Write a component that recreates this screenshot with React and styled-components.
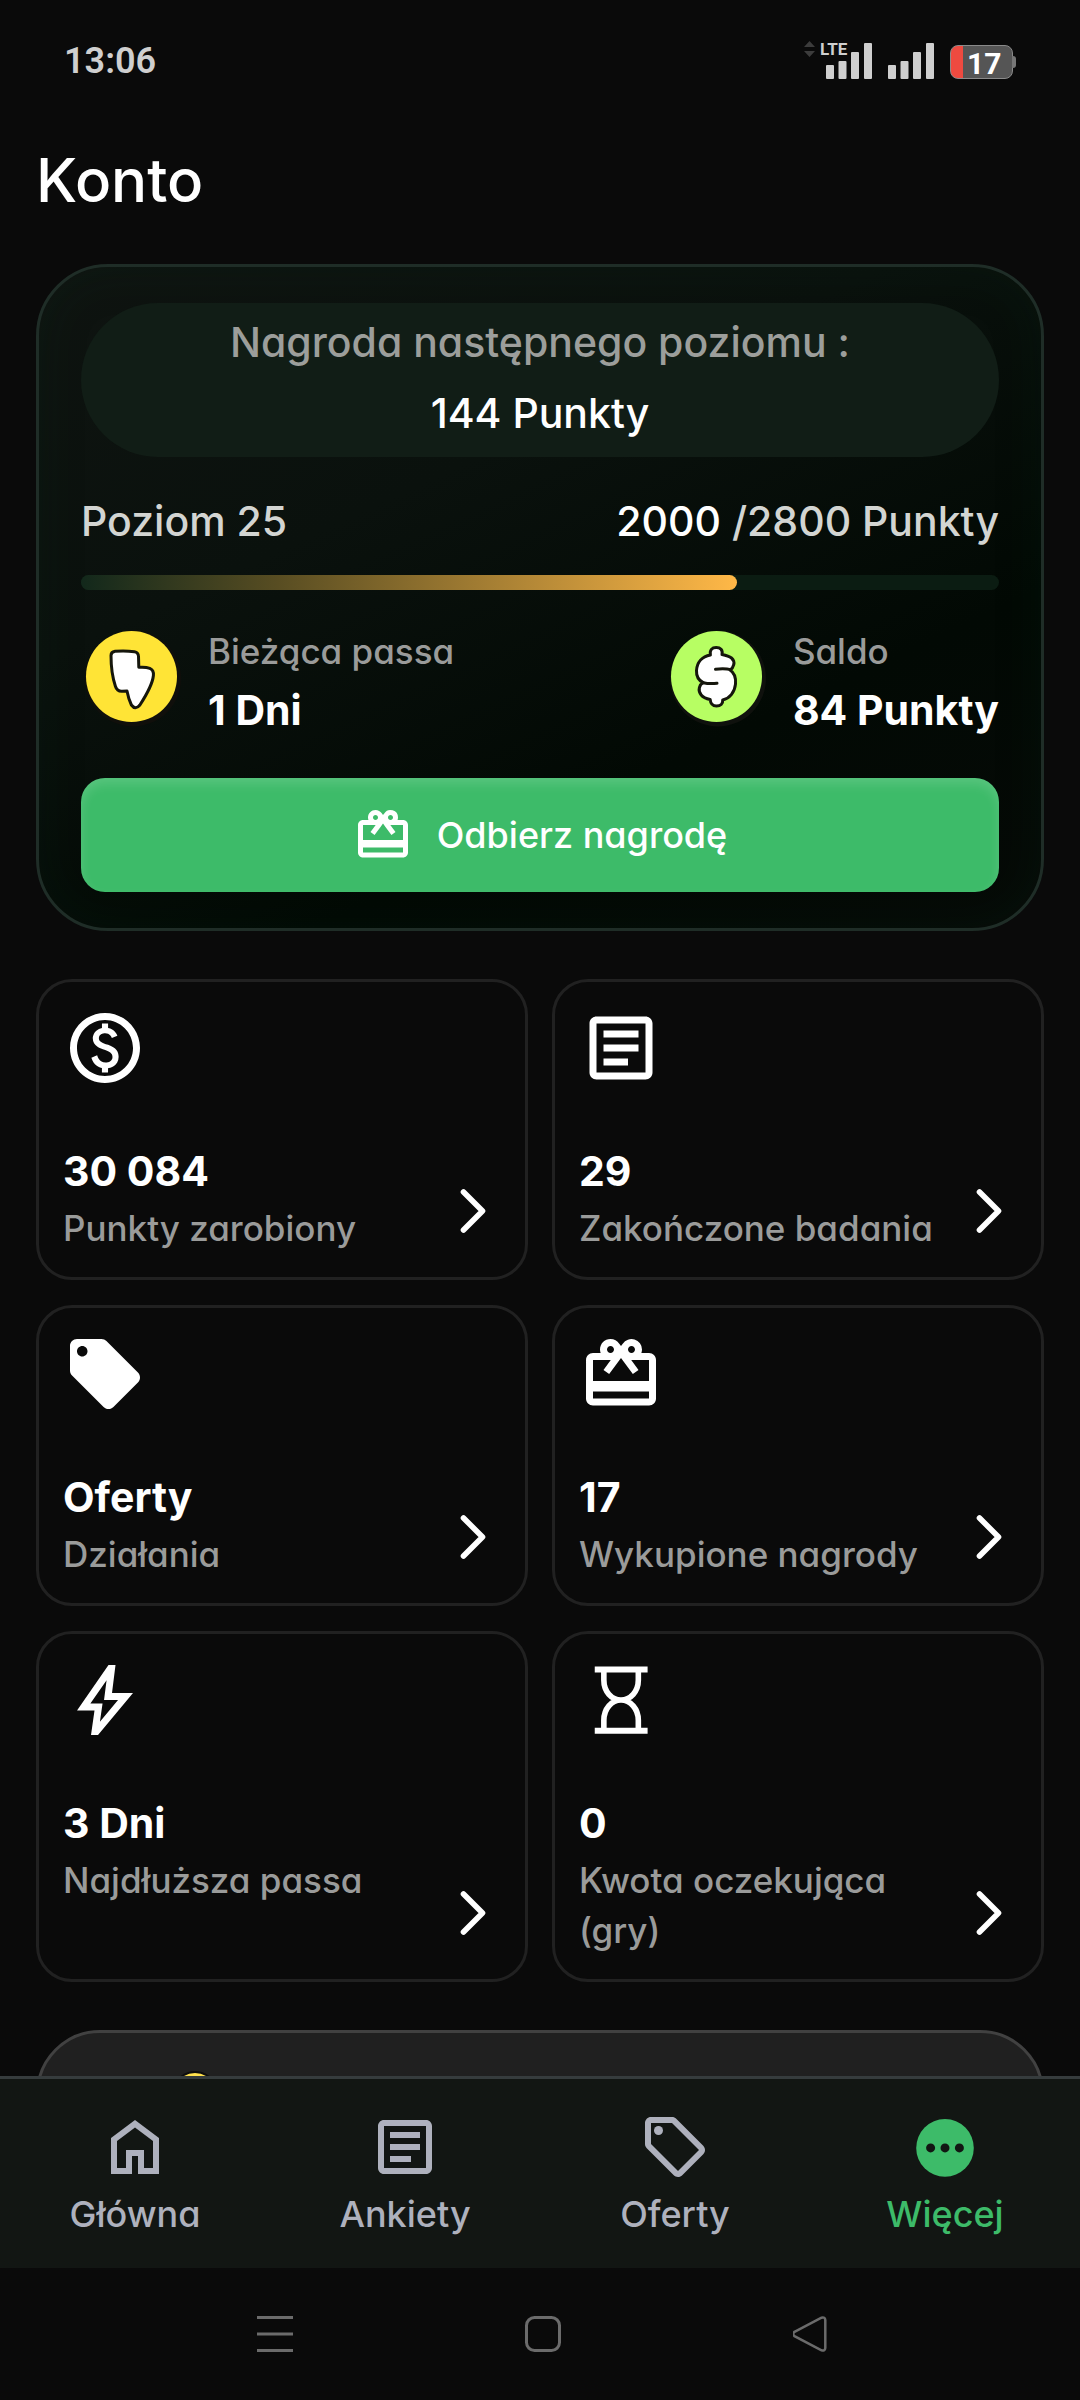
import React from 'react';
import styled, { createGlobalStyle } from 'styled-components';
import {
  MdLocalOffer,
  MdOutlineArticle,
  MdOutlineLocalOffer,
  MdOutlinePaid,
  MdRedeem,
} from 'react-icons/md';

const GlobalStyle = createGlobalStyle`
  * {
    box-sizing: border-box;
  }

  body {
    margin: 0;
    background: #0a0a0a;
    color: #fff;
    font-family: Inter, 'Open Sans', sans-serif;
    font-feature-settings: 'cv11';
    font-weight: 500;
  }
`;

const Screen = styled.div`
  display: flex;
  flex-direction: column;
  height: 100vh;
`;

/* status bar */

const StatusBar = styled.header`
  display: flex;
  flex-shrink: 0;
  align-items: center;
  justify-content: space-between;
  height: 122px;
  padding: 0 64px;
  font-family: Roboto, sans-serif;
  color: #cfcfcf;
`;

const Time = styled.time`
  font-size: 36px;
  font-weight: 600;
  line-height: 48px;
`;

const StatusIcons = styled.div`
  display: flex;
  align-items: flex-end;
  gap: 16px;
`;

const Signal = styled.div`
  position: relative;
  display: flex;

  svg {
    display: block;
  }
`;

const Network = styled.span`
  position: absolute;
  top: -4px;
  left: -6px;
  font-family: 'Liberation Sans Narrow', Roboto, sans-serif;
  font-size: 17px;
  font-weight: 700;
  line-height: 20px;
`;

const Traffic = styled.svg`
  position: absolute;
  top: -2px;
  left: -22px;
`;

const Battery = styled.div`
  position: relative;
  width: 63px;
  height: 34px;
  margin-right: 3px;
  padding-left: 16px;
  border: 1px solid #8a8a8a;
  border-radius: 8px;
  background: linear-gradient(90deg, #ee4a40 12px, #555 12px);
  color: #fff;
  font-size: 30px;
  font-weight: 700;
  line-height: 36px;

  &::after {
    content: '';
    position: absolute;
    top: 10px;
    right: -4px;
    width: 4px;
    height: 12px;
    border-radius: 0 3px 3px 0;
    background: #777;
  }
`;

/* account page */

const Main = styled.main`
  flex: 1;
  min-height: 0;
  padding: 22px 36px 0;
  overflow: hidden;
`;

const Title = styled.h1`
  margin: 0 0 48px;
  font-size: 60px;
  font-weight: 500;
  line-height: 72px;
`;

const LevelCard = styled.section`
  padding: 36px 42px;
  border: 3px solid #1f2d27;
  border-radius: 72px;
  background: linear-gradient(155deg, #0f1411 0%, #0a110d 35%, #020904 70%, #060a07 100%);
  box-shadow: inset 0 0 48px rgba(12, 44, 27, 0.2);
`;

const NextReward = styled.div`
  padding: 4px 0 8px;
  border-radius: 77px;
  background: #111d16;
  font-size: 41px;
  line-height: 71px;
  text-align: center;
`;

const Line = styled.p`
  margin: 0;
  color: ${({ $muted }) => ($muted ? '#9c9e9b' : '#fff')};
`;

const LevelRow = styled.div`
  display: flex;
  justify-content: space-between;
  margin: 36px 0 26px;
  color: #d3d5d2;
  font-size: 41px;
  line-height: 56px;
`;

const Current = styled.span`
  color: #fff;
`;

const Track = styled.div`
  height: 15px;
  border-radius: 8px;
  background: #0b1c12;
`;

const Fill = styled.div`
  height: 100%;
  border-radius: 8px;
  background: linear-gradient(90deg, #12281b, #584d22 30%, #ffb847);
`;

const Stats = styled.div`
  display: flex;
  justify-content: space-between;
  margin: 36px 0;
`;

const Stat = styled.div`
  display: flex;
  align-items: flex-start;
  gap: 24px;
`;

const Caption = styled.p`
  margin: 0;
  color: #9a9b9a;
  font-size: 35px;
  line-height: 50px;
`;

const Value = styled.p`
  margin: 0;
  color: #fff;
  font-size: 41px;
  font-weight: 700;
  line-height: 64px;
`;

const StatText = styled.div`
  display: flex;
  flex-direction: column;
  gap: 2px;
`;

const ClaimButton = styled.button`
  display: flex;
  align-items: center;
  justify-content: center;
  gap: 24px;
  width: 100%;
  height: 114px;
  padding: 0;
  border: 0;
  border-radius: 24px;
  background: #3dbb69;
  box-shadow: inset 0 6px 12px rgba(255, 255, 255, 0.14);
  color: #fff;
  font: inherit;
  font-size: 36px;
  cursor: pointer;
`;

const Grid = styled.div`
  display: grid;
  grid-template-columns: 1fr 1fr;
  gap: 25px 24px;
  margin: 48px 0;
`;

const Tile = styled.a`
  display: flex;
  flex-direction: column;
  gap: 49px;
  padding: 24px;
  border: 3px solid #212121;
  border-radius: 36px;
  color: #fff;
  text-decoration: none;

  > svg {
    display: block;
    flex-shrink: 0;
  }
`;

const TileFooter = styled.div`
  display: flex;
  flex: 1;
  gap: 12px;
  justify-content: space-between;

  > svg {
    flex-shrink: 0;
    align-self: flex-end;
  }
`;

const Promo = styled.section`
  padding: 38px 133px;
  border: 3px solid #414141;
  border-radius: 72px;
  background: #202020;

  svg {
    display: block;
  }
`;

/* bottom bars */

const TabBar = styled.nav`
  display: grid;
  flex-shrink: 0;
  grid-template-columns: repeat(4, 1fr);
  padding: 32px 0 29px;
  border-top: 3px solid #363c3d;
  background: #121613;
`;

const Tab = styled.a`
  display: flex;
  flex-direction: column;
  align-items: center;
  gap: 6px;
  color: ${({ $active }) => ($active ? '#3dbb69' : '#aeb1bd')};
  font-size: 36px;
  line-height: 50px;
  text-decoration: none;
`;

const SystemBar = styled.div`
  display: flex;
  flex-shrink: 0;
  align-items: center;
  justify-content: center;
  gap: 232px;
  height: 132px;
  padding-left: 6px;
`;

const SystemButton = styled.button`
  width: 36px;
  height: 36px;
  padding: 0;
  border: 0;
  background: none;
  color: #6b6b6b;

  svg {
    display: block;
  }
`;

const SignalBars = () => (
  <svg width="46" height="36" viewBox="0 0 46 36" fill="currentColor">
    <rect x="0" y="22" width="8" height="14" rx="1" />
    <rect x="12.5" y="18" width="8" height="18" rx="1" />
    <rect x="25" y="9" width="8" height="27" rx="1" />
    <rect x="38" y="0" width="8" height="36" rx="1" />
  </svg>
);

const StreakCoin = () => (
  <svg width="103" height="103" viewBox="0 0 103 103">
    <circle cx="52" cy="52.5" r="48" fill="#100f0b" />
    <circle cx="50.5" cy="50.5" r="45.5" fill="#ffe436" />
    <path
      d="M30 29.5q0-3.6 4-4.2q10-.9 19.5.4q3.8.6 4 4.8l.3 10.8q7-.5 11 1q4.2 1.8 3.6 7.2c-1 10-8 21-13.5 29.5q-4.5 5.5-8.5 0q-2.9-6-4.4-14l-5 .2q-5 .2-6.6-5c-3-9-4.4-20-4.4-30.7z"
      fill="#fff"
      stroke="#15160c"
      strokeWidth="3"
      strokeLinejoin="round"
    />
  </svg>
);

const BalanceCoin = () => (
  <svg width="103" height="103" viewBox="0 0 103 103">
    <circle cx="52" cy="52.5" r="48" fill="#0f110d" />
    <circle cx="50.5" cy="50.5" r="45.5" fill="#b7fe63" />
    <g stroke="#15160c" strokeWidth="3" strokeLinecap="round" strokeLinejoin="round">
      <path
        d="M44.4 29C43.5 24 46 21.4 50.2 21.4S57 24 56 28.5c4 .8 7 1.5 9.5 3.5 4.5 3.8 2 10-1.5 12 4.5 2.8 6 8 5.5 14-.8 8.5-6 14.5-12.8 16C57 78 54.5 80 50.5 80S44.5 77.5 44.2 73.5c-4-.8-7-2-9-4.5-4-5-1.5-10.5 2-12.3C33 54.5 30.2 50.5 30.5 44.5 31 36.5 36 30.5 44.4 29z"
        fill="#fff"
      />
      <path d="M65 43.6Q58 42.3 49.5 43.3M37.2 56.7Q44 58.2 51 57.2" fill="none" />
    </g>
  </svg>
);

const BoltIcon = ({ size }) => (
  <svg width={size} height={size} viewBox="0 0 24 24" fill="currentColor">
    <path d="m10.55 18.2 5.175-6.2h-4l.725-5.675L7.825 13H11.3l-.75 5.2ZM8 22l1-7H4l9-13h2l-1 8h6L10 22H8Z" />
  </svg>
);

const HourglassIcon = ({ size }) => (
  <svg width={size} height={size} viewBox="0 0 24 24" fill="none" stroke="currentColor" strokeWidth="1.6">
    <path d="M4.5 3.3h15.1M4.5 20.8h15.1" strokeWidth="1.7" />
    <path d="M7.1 3.3v3C7.1 9.6 9.3 12 12 12s4.95-2.4 4.95-5.7v-3M7.1 20.8v-3C7.1 14.5 9.3 12 12 12s4.95 2.5 4.95 5.8v3" />
  </svg>
);

const HomeIcon = ({ size }) => (
  <svg width={size} height={size} viewBox="0 0 24 24" fill="currentColor">
    <path d="M6 19h3v-6h6v6h3v-9l-6-4.5L6 10v9Zm-2 2V9l8-6 8 6v12h-7v-6h-2v6H4Z" />
  </svg>
);

const MoreIcon = ({ size }) => (
  <svg width={size} height={size} viewBox="0 0 24 24">
    <circle cx="12" cy="12.3" r="9.6" fill="currentColor" />
    <g fill="#121613">
      <circle cx="7.2" cy="12.3" r="1.5" />
      <circle cx="12" cy="12.3" r="1.5" />
      <circle cx="16.8" cy="12.3" r="1.5" />
    </g>
  </svg>
);

const Chevron = () => (
  <svg width="56" height="84" viewBox="0 0 56 84" fill="none" stroke="currentColor">
    <path d="M18.5 23 37.5 42 18.5 61" strokeWidth="5.6" strokeLinecap="round" strokeLinejoin="round" />
  </svg>
);

const tiles = [
  { icon: MdOutlinePaid, value: '30 084', label: 'Punkty zarobiony' },
  { icon: MdOutlineArticle, value: '29', label: 'Zakończone badania' },
  { icon: MdLocalOffer, value: 'Oferty', label: 'Działania' },
  { icon: MdRedeem, value: '17', label: 'Wykupione nagrody' },
  { icon: BoltIcon, value: '3 Dni', label: 'Najdłuższa passa' },
  { icon: HourglassIcon, value: '0', label: 'Kwota oczekująca (gry)' },
];

const tabs = [
  { icon: HomeIcon, label: 'Główna' },
  { icon: MdOutlineArticle, label: 'Ankiety' },
  { icon: MdOutlineLocalOffer, label: 'Oferty' },
  { icon: MoreIcon, label: 'Więcej', active: true },
];

const points = 2000;
const goal = 2800;

export default function App() {
  return (
    <>
      <GlobalStyle />
      <Screen>
        <StatusBar>
          <Time>13:06</Time>
          <StatusIcons>
            <Signal>
              <Traffic width="11" height="16" viewBox="0 0 11 16" fill="#3c3c3c">
                <path d="M5.5 0 11 6H0zM5.5 16 0 10h11z" />
              </Traffic>
              <Network>LTE</Network>
              <SignalBars />
            </Signal>
            <Signal>
              <SignalBars />
            </Signal>
            <Battery>17</Battery>
          </StatusIcons>
        </StatusBar>

        <Main>
          <Title>Konto</Title>

          <LevelCard>
            <NextReward>
              <Line $muted>Nagroda następnego poziomu :</Line>
              <Line>144 Punkty</Line>
            </NextReward>
            <LevelRow>
              <span>Poziom 25</span>
              <span>
                <Current>{points}</Current> /{goal} Punkty
              </span>
            </LevelRow>
            <Track>
              <Fill style={{ width: `${(points / goal) * 100}%` }} />
            </Track>
            <Stats>
              <Stat>
                <StreakCoin />
                <StatText>
                  <Caption>Bieżąca passa</Caption>
                  <Value>1 Dni</Value>
                </StatText>
              </Stat>
              <Stat>
                <BalanceCoin />
                <StatText>
                  <Caption>Saldo</Caption>
                  <Value>84 Punkty</Value>
                </StatText>
              </Stat>
            </Stats>
            <ClaimButton type="button">
              <MdRedeem size={60} />
              Odbierz nagrodę
            </ClaimButton>
          </LevelCard>

          <Grid>
            {tiles.map(({ icon: Icon, value, label }) => (
              <Tile href="#" key={label}>
                <Icon size={84} />
                <TileFooter>
                  <div>
                    <Value>{value}</Value>
                    <Caption>{label}</Caption>
                  </div>
                  <Chevron />
                </TileFooter>
              </Tile>
            ))}
          </Grid>

          <Promo>
            <svg width="46" height="46" viewBox="0 0 46 46">
              <circle cx="23" cy="23" r="22" fill="#ffe14d" stroke="#0d0d0d" strokeWidth="2" />
            </svg>
          </Promo>
        </Main>

        <TabBar>
          {tabs.map(({ icon: Icon, label, active }) => (
            <Tab href="#" key={label} $active={active}>
              <Icon size={72} />
              {label}
            </Tab>
          ))}
        </TabBar>

        <SystemBar>
          <SystemButton type="button" aria-label="Menu">
            <svg width="36" height="36" viewBox="0 0 36 36" stroke="currentColor" strokeWidth="3">
              <path d="M0 1.5h36M0 18h36M0 34.5h36" />
            </svg>
          </SystemButton>
          <SystemButton type="button" aria-label="Ekran główny">
            <svg width="36" height="36" viewBox="0 0 36 36" fill="none" stroke="currentColor" strokeWidth="3">
              <rect x="1.5" y="1.5" width="33" height="33" rx="8" />
            </svg>
          </SystemButton>
          <SystemButton type="button" aria-label="Wstecz">
            <svg width="36" height="36" viewBox="0 0 36 36" fill="none" stroke="currentColor" strokeWidth="2.5">
              <path d="M1.5 15.8 28.5 1.7q3.5-1 3.8 2.5v27.6q-.3 3.5-3.8 2.5L1.5 20.2q-2.6-2.2 0-4.4z" />
            </svg>
          </SystemButton>
        </SystemBar>
      </Screen>
    </>
  );
}
